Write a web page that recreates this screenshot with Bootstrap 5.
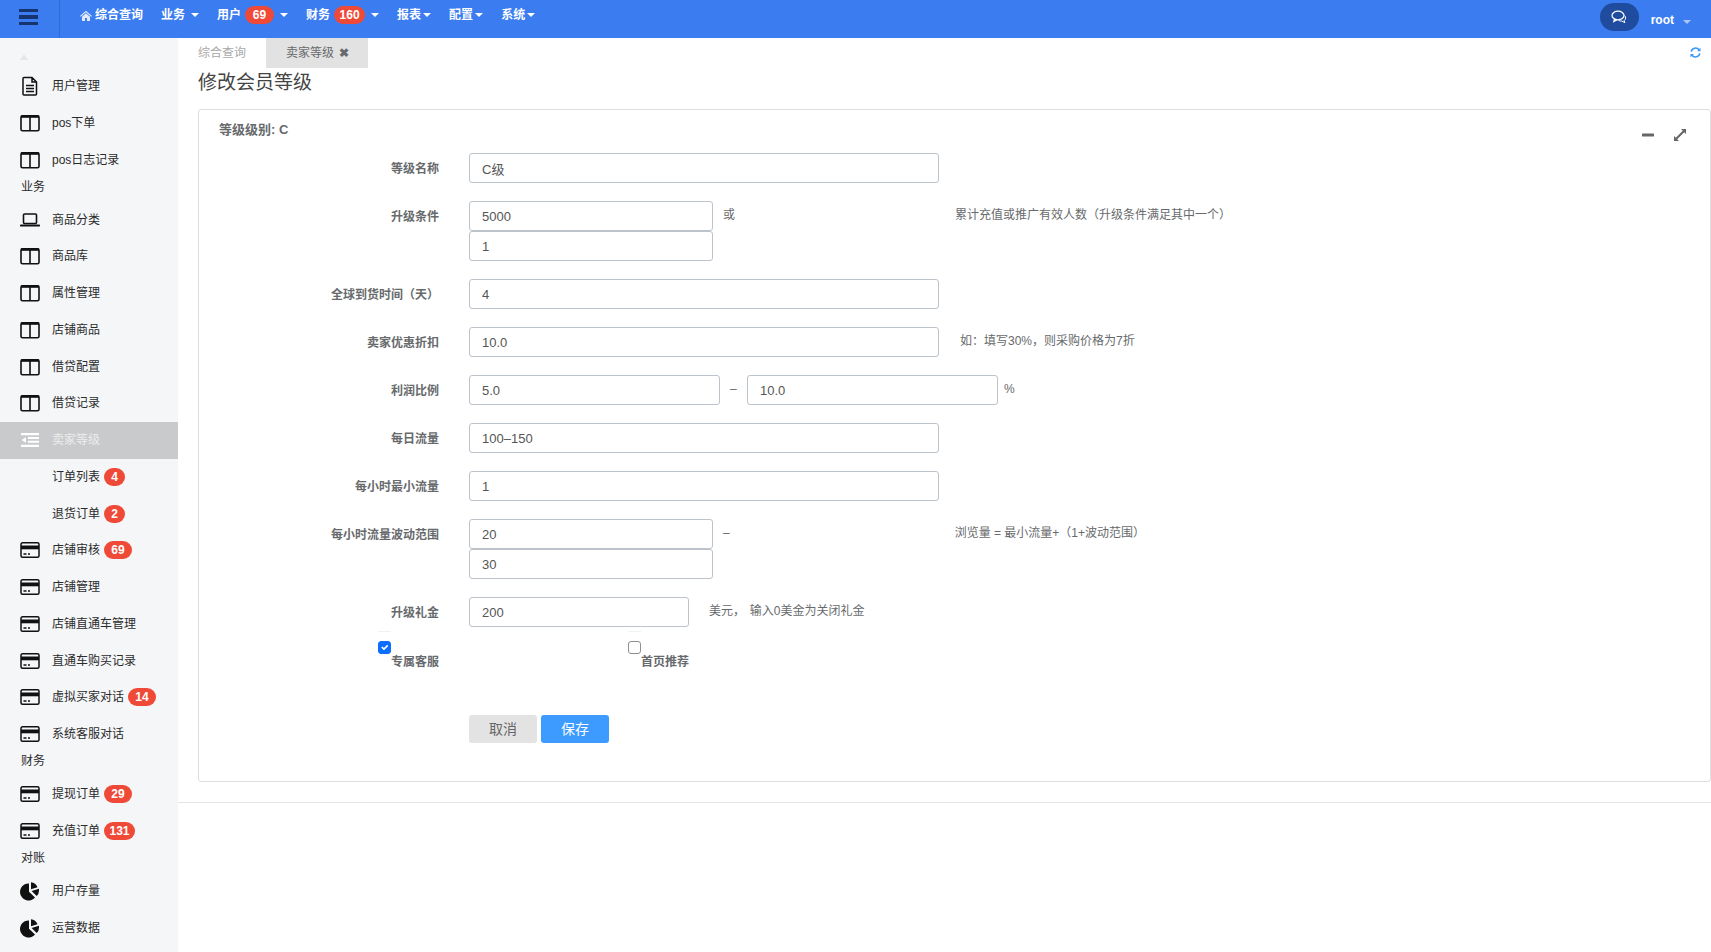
<!DOCTYPE html>
<html lang="zh">
<head>
<meta charset="utf-8">
<title>修改会员等级</title>
<link rel="stylesheet" href="https://cdn.jsdelivr.net/npm/bootstrap@5.3.0/dist/css/bootstrap.min.css">
<style>
html,body{height:100%;}
body{font-family:"Liberation Sans","Noto Sans CJK SC",sans-serif;font-size:12px;color:#676a6c;background:#fff;overflow:hidden;}
.topbar{height:38px;background:#3b7cf0;color:#fff;}
.burger{width:60px;height:38px;border-right:1px solid #2f69d3;padding:9px 0 0 19px;}
.burger span{display:block;width:19px;height:3.4px;background:#16356f;margin-bottom:3px;}
.topnav{margin-left:20px;gap:18px;padding-top:6px;font-weight:700;line-height:18px;height:24px;}
.topnav .tn{display:flex;align-items:center;}
.topnav .tn.dropdown-toggle::after,.usr.dropdown-toggle::after{border-width:4px 4px 0;margin-left:2px;vertical-align:0;}
.topnav .tn.wide::after{margin-left:6px;}
.nb{background:#ef4a38;color:#fff;font-size:12px;font-weight:700;line-height:18px;height:18px;padding:0 5.5px;border-radius:9px;display:inline-block;text-align:center;min-width:28px;}
.topnav .nb{margin-left:4px;min-width:29px;}
.chatpill{width:39px;height:28px;margin-top:-4px;background:#204c9f;border-radius:14px;}
.usr{font-weight:700;margin:2px 20px 0 12px;}
.usr.dropdown-toggle::after{margin-left:9px;border-top-color:#a9c4f5;}
.shell{height:914px;}
.sidenav{width:178px;background:#f5f6f8;color:#2b2b2b;flex:none;}
.sn-top{height:29.8px;padding:16px 0 0 20px;}
.sn-row{height:36.75px;padding-left:20px;gap:12px;line-height:18px;}
.sn-row svg{width:20px;height:20px;flex:none;color:#111;}
.sn-row .nb{margin-left:-8px;}
.sn-row .nb.one{min-width:21px;}
.sn-plain{padding-left:52px;}
.sn-on{background:#c9cacc;color:#eceded;}
.sn-on svg{color:#fff;}
.sn-sec{height:23.3px;padding:0 0 6px 21px;display:flex;align-items:center;}
.mainpane{min-width:0;}
.tabsbar{height:30px;}
.tabit{line-height:30px;color:#a9a9a9;}
.tabit.first{width:68px;margin-left:20px;}
.tabit.cur{background:#e2e2e2;color:#676a6c;padding:0 19px 0 20px;}
.tabit.cur b{margin-left:5px;font-size:12px;}
.spin{width:11px;height:11px;margin:9px 10px 0 0;color:#3b97f6;}
.pagehead{font-size:19px;font-weight:400;color:#444;margin:0 0 9px 20px;line-height:30px;height:32px;}
.cardwrap{padding:0 0 20px 20px;border-bottom:1px solid #e3e5e8;}
.panel-box{height:673px;border:1px solid #ddd;border-radius:3px;}
.panel-head{height:43px;padding:11px 0 0 20px;font-size:13px;font-weight:700;line-height:17px;color:#676a6c;}
.panel-tools{gap:20px;padding:8px 24px 0 0;}
.panel-tools svg{width:12px;height:12px;color:#666;}
.frow{margin-bottom:18px;}
.flab{width:240px;flex:none;text-align:right;font-weight:700;line-height:18px;padding-top:7px;}
.fbox{margin-left:30px;flex:none;}
.inp{height:30px;border:1px solid #bcc3ca;border-radius:3px;font-size:13px;color:#555;padding:0 12px;box-shadow:none;}
.w469{width:470px;}.w244{width:244px;}.w251{width:251px;}.w220{width:220px;}
.hint{line-height:18px;padding-top:5px;color:#676a6c;}
.chks{margin:4px 0 0 179px;gap:189px;}
.chkit{width:61px;font-weight:700;line-height:16px;}
.chkit .tick{display:block;border-top:1px solid #f1f1f1;width:13px;padding-top:9px;height:23px;}
.chkit .form-check-input{width:13px;height:13px;margin:0;display:block;border-radius:3px;border:1px solid #8f8f8f;}
.chkit .form-check-input:checked{border-color:#0d6efd;background-color:#0d6efd;}
.chkit span.tx{display:block;text-align:right;}
.acts{margin:45px 0 0 270px;gap:4px;}
.acts .btn{width:68px;height:28px;padding:0;font-size:14px;line-height:28px;border:0;border-radius:3px;}
.bcancel{background:#e3e3e3;color:#666;}
.bsave{background:#3d9bff;color:#fff;}
.help-or{margin-left:10px;}
.help-a{margin-left:220px;}
.help-b{margin-left:21px;}
.help-dash{margin:0 0 0 10px;width:17px;}
.help-pct{margin-left:6px;}
.help-c{margin-left:225px;}
.help-d{margin-left:20px;word-spacing:1.500px;}
.homeic{margin-right:3px;}
</style>
</head>
<body>
<svg width="0" height="0" class="d-block" aria-hidden="true">
<symbol id="i-doc" viewBox="0 0 20 20"><path d="M4 1.500h8l4.500 4.500v12a1 1 0 0 1-1 1H4a1 1 0 0 1-1-1v-15.500a1 1 0 0 1 1-1z M12 1.500v4.500h4.500 M6 9.500h8 M6 12.500h8 M6 15.500h8" fill="none" stroke="currentColor" stroke-width="1.500"/></symbol>
<symbol id="i-cols" viewBox="0 0 20 20"><rect x="1" y="2.800" width="18" height="15" rx="1.500" fill="none" stroke="currentColor" stroke-width="1.600"/><rect x="1" y="2.400" width="18" height="2.400" fill="currentColor"/><path d="M10 3v14.500" stroke="currentColor" stroke-width="1.600"/></symbol>
<symbol id="i-lap" viewBox="0 0 20 20"><rect x="3.500" y="4" width="13" height="9.500" rx="1" fill="none" stroke="currentColor" stroke-width="1.600"/><path d="M1 15.500h18" stroke="currentColor" stroke-width="2.200" stroke-linecap="round"/></symbol>
<symbol id="i-out" viewBox="0 0 20 20"><path d="M1 3h18v2.200H1z M8 7h11v2H8z M8 10.800h11v2H8z M1 14.800h18V17H1z M6 7.200v5.600L1.500 10z" fill="currentColor"/></symbol>
<symbol id="i-card" viewBox="0 0 20 20"><rect x="1" y="2.800" width="18" height="14.500" rx="1.500" fill="none" stroke="currentColor" stroke-width="1.500"/><rect x="1" y="5.500" width="18" height="3.800" fill="currentColor"/><path d="M3.500 14h3 M8 14h2" stroke="currentColor" stroke-width="1.300"/></symbol>
<symbol id="i-pie" viewBox="0 0 20 20"><path d="M9 2.500v8.300l6 5.700A8.500 8.500 0 1 1 9 2.500z M11 1.300a8 8 0 0 1 6.500 5l-6.500 2z M11.600 10.100l7.300-2.300a8.500 8.500 0 0 1-2.200 7.300z" fill="currentColor"/></symbol>
</svg>

<header class="topbar d-flex">
  <div class="burger"><span></span><span></span><span></span></div>
  <nav class="topnav d-flex">
    <div class="tn"><svg width="12" height="11" viewBox="0 0 12 11" class="homeic"><path d="M6 .8 0 6l.8.8L6 2.300l5.200 4.500L12 6zM2 6.800V11h3V8h2v3h3V6.800L6 3.300z" fill="#dfe9fb"/></svg>综合查询</div>
    <div class="tn wide dropdown-toggle">业务</div>
    <div class="tn wide dropdown-toggle">用户<span class="nb">69</span></div>
    <div class="tn wide dropdown-toggle">财务<span class="nb">160</span></div>
    <div class="tn dropdown-toggle">报表</div>
    <div class="tn dropdown-toggle">配置</div>
    <div class="tn dropdown-toggle">系统</div>
  </nav>
  <div class="ms-auto d-flex align-items-center">
    <div class="chatpill d-flex align-items-center justify-content-center">
      <svg width="16" height="14" viewBox="0 0 16 14" fill="none" stroke="#fff" stroke-width="1.200"><ellipse cx="7" cy="5.500" rx="6" ry="4.300"/><path d="M3.500 9 2.800 11.500 6 9.800"/><path d="M13.500 5.500c1.700 1.500 1.500 3.800-.3 5l.6 2.200-3-1.700c-1.200.2-2.300 0-3.200-.6" stroke-width="1"/></svg>
    </div>
    <div class="usr dropdown-toggle">root</div>
  </div>
</header>

<div class="shell d-flex">
  <aside class="sidenav">
    <div class="sn-top"><svg width="8" height="8" viewBox="0 0 8 8" class="d-block"><path d="M4 0 0 6h8z" fill="#e6e7e9"/></svg></div>
    <div class="sn-row d-flex align-items-center"><svg><use href="#i-doc"/></svg>用户管理</div>
    <div class="sn-row d-flex align-items-center"><svg><use href="#i-cols"/></svg>pos下单</div>
    <div class="sn-row d-flex align-items-center"><svg><use href="#i-cols"/></svg>pos日志记录</div>
    <div class="sn-sec">业务</div>
    <div class="sn-row d-flex align-items-center"><svg><use href="#i-lap"/></svg>商品分类</div>
    <div class="sn-row d-flex align-items-center"><svg><use href="#i-cols"/></svg>商品库</div>
    <div class="sn-row d-flex align-items-center"><svg><use href="#i-cols"/></svg>属性管理</div>
    <div class="sn-row d-flex align-items-center"><svg><use href="#i-cols"/></svg>店铺商品</div>
    <div class="sn-row d-flex align-items-center"><svg><use href="#i-cols"/></svg>借贷配置</div>
    <div class="sn-row d-flex align-items-center"><svg><use href="#i-cols"/></svg>借贷记录</div>
    <div class="sn-row sn-on d-flex align-items-center"><svg><use href="#i-out"/></svg>卖家等级</div>
    <div class="sn-row sn-plain d-flex align-items-center">订单列表<span class="nb one">4</span></div>
    <div class="sn-row sn-plain d-flex align-items-center">退货订单<span class="nb one">2</span></div>
    <div class="sn-row d-flex align-items-center"><svg><use href="#i-card"/></svg>店铺审核<span class="nb">69</span></div>
    <div class="sn-row d-flex align-items-center"><svg><use href="#i-card"/></svg>店铺管理</div>
    <div class="sn-row d-flex align-items-center"><svg><use href="#i-card"/></svg>店铺直通车管理</div>
    <div class="sn-row d-flex align-items-center"><svg><use href="#i-card"/></svg>直通车购买记录</div>
    <div class="sn-row d-flex align-items-center"><svg><use href="#i-card"/></svg>虚拟买家对话<span class="nb">14</span></div>
    <div class="sn-row d-flex align-items-center"><svg><use href="#i-card"/></svg>系统客服对话</div>
    <div class="sn-sec">财务</div>
    <div class="sn-row d-flex align-items-center"><svg><use href="#i-card"/></svg>提现订单<span class="nb">29</span></div>
    <div class="sn-row d-flex align-items-center"><svg><use href="#i-card"/></svg>充值订单<span class="nb">131</span></div>
    <div class="sn-sec">对账</div>
    <div class="sn-row d-flex align-items-center"><svg><use href="#i-pie"/></svg>用户存量</div>
    <div class="sn-row d-flex align-items-center"><svg><use href="#i-pie"/></svg>运营数据</div>
  </aside>

  <main class="mainpane flex-grow-1">
    <div class="tabsbar d-flex">
      <div class="tabit first">综合查询</div>
      <div class="tabit cur">卖家等级<b>✖</b></div>
      <svg class="spin ms-auto" viewBox="0 0 12 12" fill="none" stroke="currentColor" stroke-width="1.700"><path d="M1.300 5A4.800 4.800 0 0 1 10 3.300"/><path d="M10.700 7A4.800 4.800 0 0 1 2 8.700"/><path d="M11.500.8v3.700H7.800z M.5 11.200V7.500h3.700z" fill="currentColor" stroke="none"/></svg>
    </div>
    <h1 class="pagehead">修改会员等级</h1>
    <div class="cardwrap">
      <section class="card panel-box">
        <div class="panel-head d-flex justify-content-between">
          <span>等级级别: C</span>
          <div class="panel-tools d-flex">
            <svg viewBox="0 0 12 12"><rect x="0" y="4.500" width="12" height="3" rx=".5" fill="currentColor"/></svg>
            <svg viewBox="0 0 12 12"><path d="M7 0h5v5l-1.800-1.800L3.200 10.200 5 12H0V7l1.800 1.800 7-7z" fill="currentColor"/></svg>
          </div>
        </div>
        <form>
          <div class="frow d-flex"><label class="flab">等级名称</label><div class="fbox w469"><input class="form-control inp" value="C级"></div></div>
          <div class="frow d-flex">
            <label class="flab">升级条件</label>
            <div class="fbox w244"><input class="form-control inp" value="5000"><input class="form-control inp" value="1"></div>
            <div class="hint help-or">或</div>
            <div class="hint help-a">累计充值或推广有效人数（升级条件满足其中一个）</div>
          </div>
          <div class="frow d-flex"><label class="flab">全球到货时间（天）</label><div class="fbox w469"><input class="form-control inp" value="4"></div></div>
          <div class="frow d-flex"><label class="flab">卖家优惠折扣</label><div class="fbox w469"><input class="form-control inp" value="10.0"></div><div class="hint help-b">如：填写30%，则采购价格为7折</div></div>
          <div class="frow d-flex">
            <label class="flab">利润比例</label>
            <div class="fbox w251"><input class="form-control inp" value="5.0"></div>
            <div class="hint help-dash">–</div>
            <div class="w251"><input class="form-control inp" value="10.0"></div>
            <div class="hint help-pct">%</div>
          </div>
          <div class="frow d-flex"><label class="flab">每日流量</label><div class="fbox w469"><input class="form-control inp" value="100–150"></div></div>
          <div class="frow d-flex"><label class="flab">每小时最小流量</label><div class="fbox w469"><input class="form-control inp" value="1"></div></div>
          <div class="frow d-flex">
            <label class="flab">每小时流量波动范围</label>
            <div class="fbox w244"><input class="form-control inp" value="20"><input class="form-control inp" value="30"></div>
            <div class="hint help-or">–</div>
            <div class="hint help-c">浏览量 = 最小流量+（1+波动范围）</div>
          </div>
          <div class="frow d-flex mb-0"><label class="flab">升级礼金</label><div class="fbox w220"><input class="form-control inp" value="200"></div><div class="hint help-d">美元， 输入0美金为关闭礼金</div></div>
          <div class="chks d-flex">
            <label class="chkit"><span class="tick"><input type="checkbox" class="form-check-input" checked></span><span class="tx">专属客服</span></label>
            <label class="chkit"><span class="tick"><input type="checkbox" class="form-check-input"></span><span class="tx">首页推荐</span></label>
          </div>
          <div class="acts d-flex">
            <button type="button" class="btn bcancel">取消</button>
            <button type="button" class="btn bsave">保存</button>
          </div>
        </form>
      </section>
    </div>
  </main>
</div>
<script src="https://cdn.jsdelivr.net/npm/bootstrap@5.3.0/dist/js/bootstrap.bundle.min.js"></script>
</body>
</html>
